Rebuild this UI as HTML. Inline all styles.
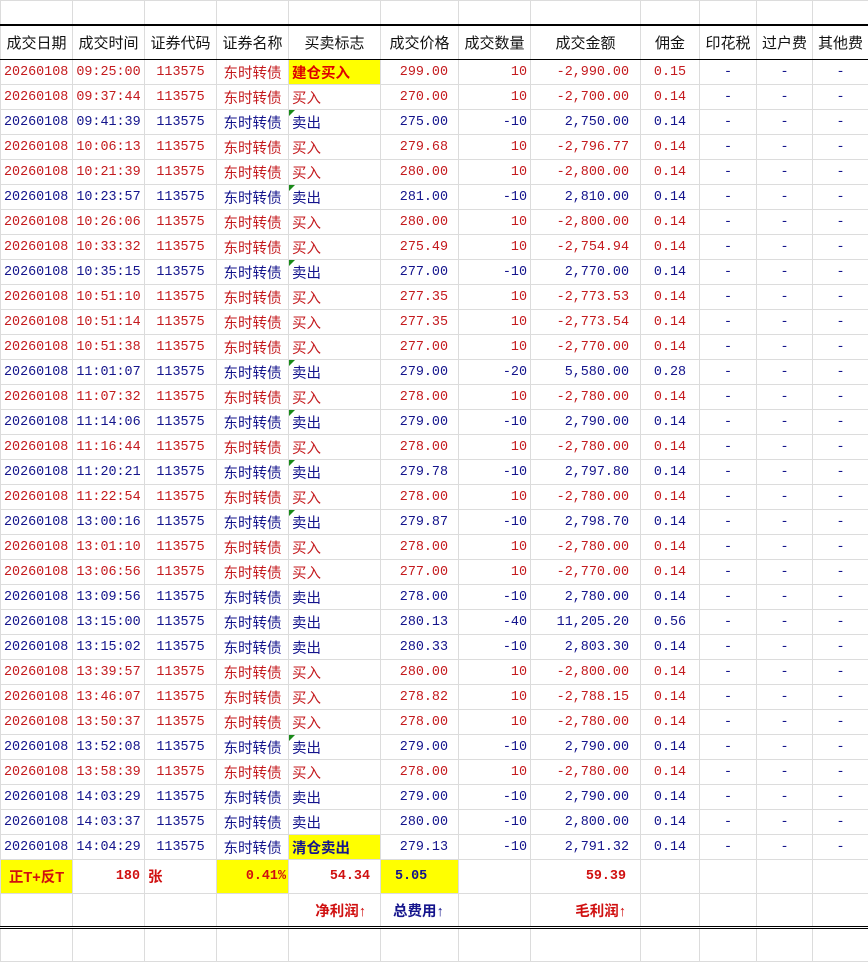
<!DOCTYPE html>
<html><head><meta charset="utf-8"><style>
body{margin:0;background:#fff;width:868px;height:962px;overflow:hidden}
table{border-collapse:collapse;table-layout:fixed;width:868px;font-family:"Liberation Mono","Noto Sans CJK SC",monospace;font-size:13.4px}
td{border:1px solid #dcdcdc;padding:0;white-space:nowrap;overflow:hidden;position:relative}
tr.d td{height:24px}
.r{color:#c41a1e}.b{color:#14148c}
.l{text-align:left;padding-left:3px}.c{text-align:center}.rt{text-align:right;padding-right:10px}
.q{text-align:right;padding-right:3px}.a{text-align:right;padding-right:11px}
.h td{height:33px;border-top:2px solid #000;border-bottom:1px solid #000;text-align:center;font-family:"Liberation Sans","Noto Sans CJK SC",sans-serif;font-size:15px;color:#111}
.f{font-family:"Liberation Sans","Noto Sans CJK SC",sans-serif;font-size:14.5px}
.y{background:#ffff00}
.bold{font-weight:bold}
.t::before{content:"";position:absolute;left:0;top:0;border-top:6px solid #1a8a1a;border-right:6px solid transparent}
.s td{height:33px;border-top:1px solid #000;font-weight:bold;color:#d01010}
.lb td{height:32px;border-bottom:3px double #000;font-weight:bold}
</style></head><body>
<table>
<colgroup><col style="width:72px"><col style="width:72px"><col style="width:72px"><col style="width:72px"><col style="width:92px"><col style="width:78px"><col style="width:72px"><col style="width:110px"><col style="width:59px"><col style="width:57px"><col style="width:56px"><col style="width:56px"></colgroup>
<tr><td style="height:23px"></td><td></td><td></td><td></td><td></td><td></td><td></td><td></td><td></td><td></td><td></td><td></td></tr>
<tr class="h"><td>成交日期</td><td>成交时间</td><td>证券代码</td><td>证券名称</td><td>买卖标志</td><td>成交价格</td><td>成交数量</td><td>成交金额</td><td>佣金</td><td>印花税</td><td>过户费</td><td>其他费</td></tr>
<tr class="d r"><td class="l">20260108</td><td class="c">09:25:00</td><td class="c">113575</td><td class="c f">东时转债</td><td class="l f y bold" style="color:#d00">建仓买入</td><td class="rt">299.00</td><td class="q">10</td><td class="a">-2,990.00</td><td class="c">0.15</td><td class="c b">-</td><td class="c b">-</td><td class="c b">-</td></tr>
<tr class="d r"><td class="l">20260108</td><td class="c">09:37:44</td><td class="c">113575</td><td class="c f">东时转债</td><td class="l f">买入</td><td class="rt">270.00</td><td class="q">10</td><td class="a">-2,700.00</td><td class="c">0.14</td><td class="c b">-</td><td class="c b">-</td><td class="c b">-</td></tr>
<tr class="d b"><td class="l">20260108</td><td class="c">09:41:39</td><td class="c">113575</td><td class="c f">东时转债</td><td class="l f t">卖出</td><td class="rt">275.00</td><td class="q">-10</td><td class="a">2,750.00</td><td class="c">0.14</td><td class="c">-</td><td class="c">-</td><td class="c">-</td></tr>
<tr class="d r"><td class="l">20260108</td><td class="c">10:06:13</td><td class="c">113575</td><td class="c f">东时转债</td><td class="l f">买入</td><td class="rt">279.68</td><td class="q">10</td><td class="a">-2,796.77</td><td class="c">0.14</td><td class="c b">-</td><td class="c b">-</td><td class="c b">-</td></tr>
<tr class="d r"><td class="l">20260108</td><td class="c">10:21:39</td><td class="c">113575</td><td class="c f">东时转债</td><td class="l f">买入</td><td class="rt">280.00</td><td class="q">10</td><td class="a">-2,800.00</td><td class="c">0.14</td><td class="c b">-</td><td class="c b">-</td><td class="c b">-</td></tr>
<tr class="d b"><td class="l">20260108</td><td class="c">10:23:57</td><td class="c">113575</td><td class="c f">东时转债</td><td class="l f t">卖出</td><td class="rt">281.00</td><td class="q">-10</td><td class="a">2,810.00</td><td class="c">0.14</td><td class="c">-</td><td class="c">-</td><td class="c">-</td></tr>
<tr class="d r"><td class="l">20260108</td><td class="c">10:26:06</td><td class="c">113575</td><td class="c f">东时转债</td><td class="l f">买入</td><td class="rt">280.00</td><td class="q">10</td><td class="a">-2,800.00</td><td class="c">0.14</td><td class="c b">-</td><td class="c b">-</td><td class="c b">-</td></tr>
<tr class="d r"><td class="l">20260108</td><td class="c">10:33:32</td><td class="c">113575</td><td class="c f">东时转债</td><td class="l f">买入</td><td class="rt">275.49</td><td class="q">10</td><td class="a">-2,754.94</td><td class="c">0.14</td><td class="c b">-</td><td class="c b">-</td><td class="c b">-</td></tr>
<tr class="d b"><td class="l">20260108</td><td class="c">10:35:15</td><td class="c">113575</td><td class="c f">东时转债</td><td class="l f t">卖出</td><td class="rt">277.00</td><td class="q">-10</td><td class="a">2,770.00</td><td class="c">0.14</td><td class="c">-</td><td class="c">-</td><td class="c">-</td></tr>
<tr class="d r"><td class="l">20260108</td><td class="c">10:51:10</td><td class="c">113575</td><td class="c f">东时转债</td><td class="l f">买入</td><td class="rt">277.35</td><td class="q">10</td><td class="a">-2,773.53</td><td class="c">0.14</td><td class="c b">-</td><td class="c b">-</td><td class="c b">-</td></tr>
<tr class="d r"><td class="l">20260108</td><td class="c">10:51:14</td><td class="c">113575</td><td class="c f">东时转债</td><td class="l f">买入</td><td class="rt">277.35</td><td class="q">10</td><td class="a">-2,773.54</td><td class="c">0.14</td><td class="c b">-</td><td class="c b">-</td><td class="c b">-</td></tr>
<tr class="d r"><td class="l">20260108</td><td class="c">10:51:38</td><td class="c">113575</td><td class="c f">东时转债</td><td class="l f">买入</td><td class="rt">277.00</td><td class="q">10</td><td class="a">-2,770.00</td><td class="c">0.14</td><td class="c b">-</td><td class="c b">-</td><td class="c b">-</td></tr>
<tr class="d b"><td class="l">20260108</td><td class="c">11:01:07</td><td class="c">113575</td><td class="c f">东时转债</td><td class="l f t">卖出</td><td class="rt">279.00</td><td class="q">-20</td><td class="a">5,580.00</td><td class="c">0.28</td><td class="c">-</td><td class="c">-</td><td class="c">-</td></tr>
<tr class="d r"><td class="l">20260108</td><td class="c">11:07:32</td><td class="c">113575</td><td class="c f">东时转债</td><td class="l f">买入</td><td class="rt">278.00</td><td class="q">10</td><td class="a">-2,780.00</td><td class="c">0.14</td><td class="c b">-</td><td class="c b">-</td><td class="c b">-</td></tr>
<tr class="d b"><td class="l">20260108</td><td class="c">11:14:06</td><td class="c">113575</td><td class="c f">东时转债</td><td class="l f t">卖出</td><td class="rt">279.00</td><td class="q">-10</td><td class="a">2,790.00</td><td class="c">0.14</td><td class="c">-</td><td class="c">-</td><td class="c">-</td></tr>
<tr class="d r"><td class="l">20260108</td><td class="c">11:16:44</td><td class="c">113575</td><td class="c f">东时转债</td><td class="l f">买入</td><td class="rt">278.00</td><td class="q">10</td><td class="a">-2,780.00</td><td class="c">0.14</td><td class="c b">-</td><td class="c b">-</td><td class="c b">-</td></tr>
<tr class="d b"><td class="l">20260108</td><td class="c">11:20:21</td><td class="c">113575</td><td class="c f">东时转债</td><td class="l f t">卖出</td><td class="rt">279.78</td><td class="q">-10</td><td class="a">2,797.80</td><td class="c">0.14</td><td class="c">-</td><td class="c">-</td><td class="c">-</td></tr>
<tr class="d r"><td class="l">20260108</td><td class="c">11:22:54</td><td class="c">113575</td><td class="c f">东时转债</td><td class="l f">买入</td><td class="rt">278.00</td><td class="q">10</td><td class="a">-2,780.00</td><td class="c">0.14</td><td class="c b">-</td><td class="c b">-</td><td class="c b">-</td></tr>
<tr class="d b"><td class="l">20260108</td><td class="c">13:00:16</td><td class="c">113575</td><td class="c f">东时转债</td><td class="l f t">卖出</td><td class="rt">279.87</td><td class="q">-10</td><td class="a">2,798.70</td><td class="c">0.14</td><td class="c">-</td><td class="c">-</td><td class="c">-</td></tr>
<tr class="d r"><td class="l">20260108</td><td class="c">13:01:10</td><td class="c">113575</td><td class="c f">东时转债</td><td class="l f">买入</td><td class="rt">278.00</td><td class="q">10</td><td class="a">-2,780.00</td><td class="c">0.14</td><td class="c b">-</td><td class="c b">-</td><td class="c b">-</td></tr>
<tr class="d r"><td class="l">20260108</td><td class="c">13:06:56</td><td class="c">113575</td><td class="c f">东时转债</td><td class="l f">买入</td><td class="rt">277.00</td><td class="q">10</td><td class="a">-2,770.00</td><td class="c">0.14</td><td class="c b">-</td><td class="c b">-</td><td class="c b">-</td></tr>
<tr class="d b"><td class="l">20260108</td><td class="c">13:09:56</td><td class="c">113575</td><td class="c f">东时转债</td><td class="l f">卖出</td><td class="rt">278.00</td><td class="q">-10</td><td class="a">2,780.00</td><td class="c">0.14</td><td class="c">-</td><td class="c">-</td><td class="c">-</td></tr>
<tr class="d b"><td class="l">20260108</td><td class="c">13:15:00</td><td class="c">113575</td><td class="c f">东时转债</td><td class="l f">卖出</td><td class="rt">280.13</td><td class="q">-40</td><td class="a">11,205.20</td><td class="c">0.56</td><td class="c">-</td><td class="c">-</td><td class="c">-</td></tr>
<tr class="d b"><td class="l">20260108</td><td class="c">13:15:02</td><td class="c">113575</td><td class="c f">东时转债</td><td class="l f">卖出</td><td class="rt">280.33</td><td class="q">-10</td><td class="a">2,803.30</td><td class="c">0.14</td><td class="c">-</td><td class="c">-</td><td class="c">-</td></tr>
<tr class="d r"><td class="l">20260108</td><td class="c">13:39:57</td><td class="c">113575</td><td class="c f">东时转债</td><td class="l f">买入</td><td class="rt">280.00</td><td class="q">10</td><td class="a">-2,800.00</td><td class="c">0.14</td><td class="c b">-</td><td class="c b">-</td><td class="c b">-</td></tr>
<tr class="d r"><td class="l">20260108</td><td class="c">13:46:07</td><td class="c">113575</td><td class="c f">东时转债</td><td class="l f">买入</td><td class="rt">278.82</td><td class="q">10</td><td class="a">-2,788.15</td><td class="c">0.14</td><td class="c b">-</td><td class="c b">-</td><td class="c b">-</td></tr>
<tr class="d r"><td class="l">20260108</td><td class="c">13:50:37</td><td class="c">113575</td><td class="c f">东时转债</td><td class="l f">买入</td><td class="rt">278.00</td><td class="q">10</td><td class="a">-2,780.00</td><td class="c">0.14</td><td class="c b">-</td><td class="c b">-</td><td class="c b">-</td></tr>
<tr class="d b"><td class="l">20260108</td><td class="c">13:52:08</td><td class="c">113575</td><td class="c f">东时转债</td><td class="l f t">卖出</td><td class="rt">279.00</td><td class="q">-10</td><td class="a">2,790.00</td><td class="c">0.14</td><td class="c">-</td><td class="c">-</td><td class="c">-</td></tr>
<tr class="d r"><td class="l">20260108</td><td class="c">13:58:39</td><td class="c">113575</td><td class="c f">东时转债</td><td class="l f">买入</td><td class="rt">278.00</td><td class="q">10</td><td class="a">-2,780.00</td><td class="c">0.14</td><td class="c b">-</td><td class="c b">-</td><td class="c b">-</td></tr>
<tr class="d b"><td class="l">20260108</td><td class="c">14:03:29</td><td class="c">113575</td><td class="c f">东时转债</td><td class="l f">卖出</td><td class="rt">279.00</td><td class="q">-10</td><td class="a">2,790.00</td><td class="c">0.14</td><td class="c">-</td><td class="c">-</td><td class="c">-</td></tr>
<tr class="d b"><td class="l">20260108</td><td class="c">14:03:37</td><td class="c">113575</td><td class="c f">东时转债</td><td class="l f">卖出</td><td class="rt">280.00</td><td class="q">-10</td><td class="a">2,800.00</td><td class="c">0.14</td><td class="c">-</td><td class="c">-</td><td class="c">-</td></tr>
<tr class="d b"><td class="l">20260108</td><td class="c">14:04:29</td><td class="c">113575</td><td class="c f">东时转债</td><td class="l f y bold">清仓卖出</td><td class="rt">279.13</td><td class="q">-10</td><td class="a">2,791.32</td><td class="c">0.14</td><td class="c">-</td><td class="c">-</td><td class="c">-</td></tr>
<tr class="s"><td class="c y f">正T+反T</td><td class="rt" style="padding-right:4px">180</td><td class="l f">张</td><td class="rt y" style="padding-right:2px">0.41%</td><td class="rt" style="padding-right:10px">54.34</td><td class="l y" style="color:#14148c;padding-left:14px">5.05</td><td></td><td class="rt" style="padding-right:14px">59.39</td><td></td><td></td><td></td><td></td></tr>
<tr class="lb"><td></td><td></td><td></td><td></td><td class="rt f" style="color:#d01010;padding-right:14px">净利润↑</td><td class="l f" style="color:#14148c;padding-left:12px">总费用↑</td><td></td><td class="rt f" style="color:#d01010;padding-right:14px">毛利润↑</td><td></td><td></td><td></td><td></td></tr>
<tr><td style="height:32px"></td><td></td><td></td><td></td><td></td><td></td><td></td><td></td><td></td><td></td><td></td><td></td></tr>
</table>
</body></html>
